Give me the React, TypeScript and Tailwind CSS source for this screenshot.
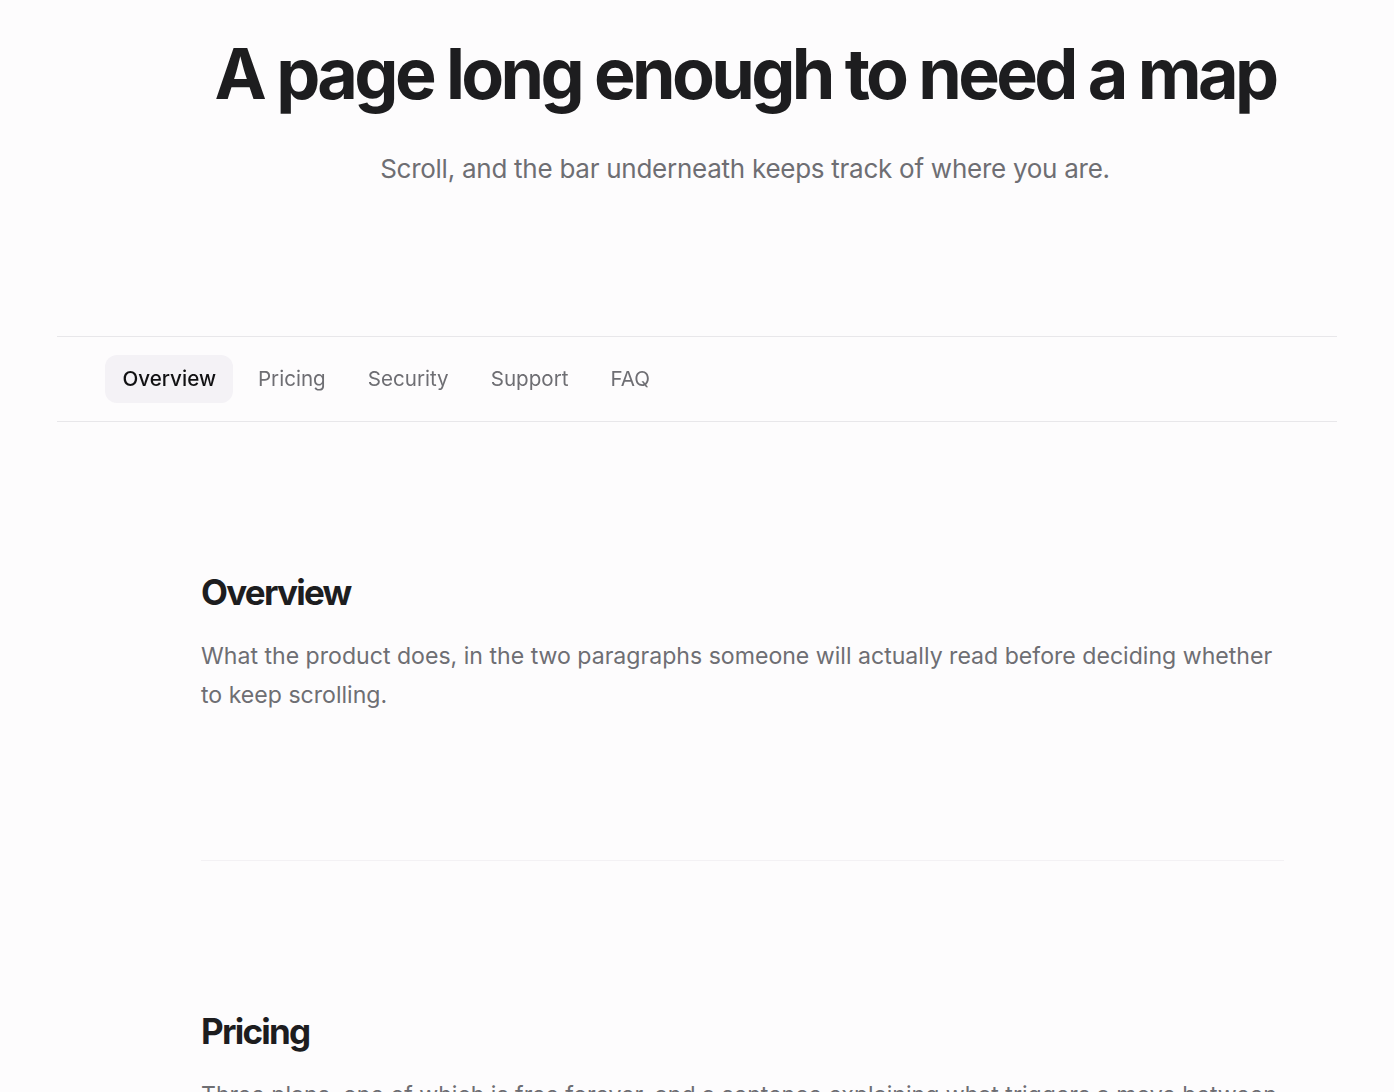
import { useState } from 'react'

const SECTIONS = [
  {
    id: 'overview',
    label: 'Overview',
    body: 'What the product does, in the two paragraphs someone will actually read before deciding whether to keep scrolling.',
  },
  {
    id: 'pricing',
    label: 'Pricing',
    body: 'Three plans, one of which is free forever, and a sentence explaining what triggers a move between them.',
  },
  {
    id: 'security',
    label: 'Security',
    body: 'Where the data lives, who can read it, and the audits that back those claims up.',
  },
  {
    id: 'support',
    label: 'Support',
    body: 'How to reach a person, how long that usually takes, and what happens outside office hours.',
  },
  {
    id: 'faq',
    label: 'FAQ',
    body: 'The questions that come up every week, answered once so nobody has to ask them again.',
  },
]

export default function App() {
  const [active, setActive] = useState('overview')

  return (
    <div className="min-h-screen bg-[#fdfcfd] font-['Inter',sans-serif] antialiased">
      {/* Hero */}
      <header className="pl-[201px] pr-[105px] pt-[34px] pb-[148px] text-center">
        <h1 className="whitespace-nowrap text-[70px] font-bold leading-[1.13] tracking-[-0.052em] text-[#1d1d1f]">
          A page long enough to need a map
        </h1>
        <p className="mt-9 text-[26px] leading-[1.5] tracking-[-0.01em] text-[#6e6e73]">
          Scroll, and the bar underneath keeps track of where you are.
        </p>
      </header>

      {/* Section nav */}
      <nav className="sticky top-0 z-10 mx-[57px] border-y border-[#e8e7ea] bg-[#fdfcfd]/90 backdrop-blur">
        <div className="flex items-center gap-[7px] py-[18px] pl-12">
          {SECTIONS.map((s) => (
            <button
              key={s.id}
              onClick={() => setActive(s.id)}
              className={`h-12 rounded-xl px-[17.5px] text-[20.6px] transition-colors ${
                active === s.id
                  ? 'bg-[#f4f2f6] font-medium text-[#111113]'
                  : 'text-[#6e6e73] hover:text-[#1d1d1f]'
              }`}
            >
              {s.label}
            </button>
          ))}
        </div>
      </nav>

      {/* Sections */}
      <main className="pl-[201px] pr-[110px]">
        {SECTIONS.map((s, i) => (
          <section
            key={s.id}
            id={s.id}
            className={`pt-[149px] pb-[145px] ${i < SECTIONS.length - 1 ? 'border-b border-[#f3f1f4]' : ''}`}
          >
            <h2 className="text-[35px] font-bold leading-[1.2] tracking-[-0.05em] text-[#1d1d1f]">
              {s.label}
            </h2>
            <p className="mt-6 text-[23.1px] leading-[39px] text-[#6e6e73]">{s.body}</p>
          </section>
        ))}
      </main>
    </div>
  )
}
